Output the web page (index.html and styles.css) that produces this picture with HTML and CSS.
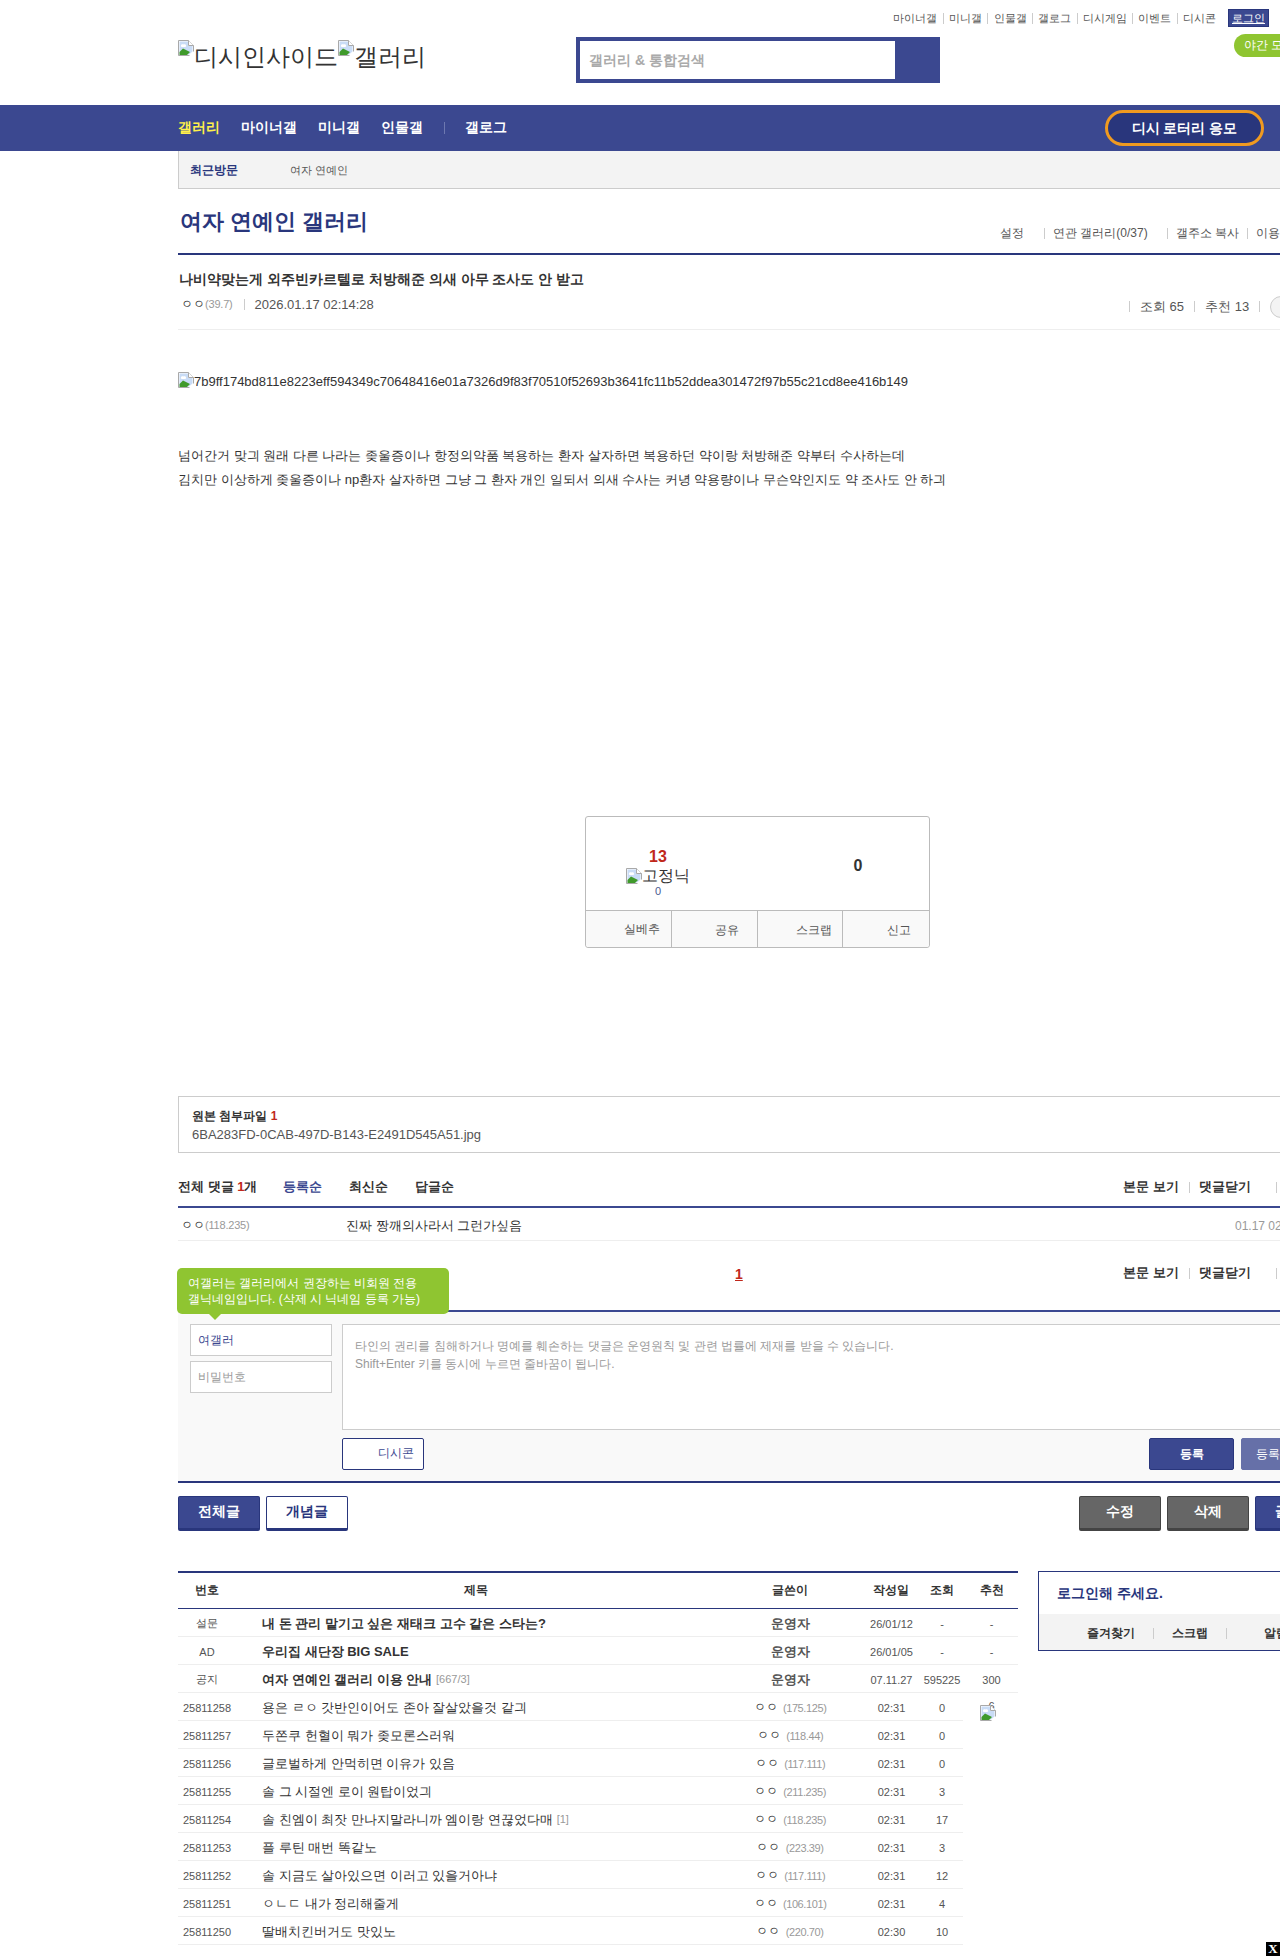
FILE: index.html
```html
<!DOCTYPE html>
<html lang="ko">
<head>
<meta charset="utf-8">
<title>여자 연예인 갤러리</title>
<link rel="stylesheet" href="styles.css">
</head>
<body>
<svg class="defs" width="0" height="0" aria-hidden="true">
  <symbol id="broken" viewBox="0 0 16 16">
    <path d="M.5.5H10.500L15.500 5.500V15.500H.5z" fill="#fff" stroke="#a9a9a9"/>
    <path d="M1.500 1.500h8.500v4.500h4.500v5.500l-3.500 3H1.500z" fill="#c9dcf6"/>
    <path d="M3 5.500c0-1 1.500-1.500 2.500-1 1-.5 2.500 0 2.500 1 .5.500 0 1.500-1 1.500H4c-1 0-1.500-1-1-1.500z" fill="#fff"/>
    <path d="M1.500 15v-3L5 8.500l4 2 3 1.500-3 3z" fill="#3f9a2b"/>
    <path d="M11 16l5-5v5z" fill="#fff"/>
    <path d="M10.500.5v5h5" fill="#fff" stroke="#a9a9a9"/>
  </symbol>
</svg>

<header class="site-head">
  <div class="wrap">
    <nav class="util">
      <a>마이너갤</a><i></i><a>미니갤</a><i></i><a>인물갤</a><i></i><a>갤로그</a><i></i><a>디시게임</a><i></i><a>이벤트</a><i></i><a>디시콘</a>
      <span class="login-btn">로그인</span>
    </nav>
    <div class="head-row">
      <div class="logo"><svg class="ico"><use href="#broken"/></svg>디시인사이드<svg class="ico"><use href="#broken"/></svg>갤러리</div>
      <div class="search"><span class="search-field">갤러리 &amp; 통합검색</span><span class="search-btn"></span></div>
      <span class="night">야간 모드</span>
    </div>
  </div>
</header>

<div class="gnb">
  <div class="wrap gnb-in">
    <a class="on">갤러리</a><a>마이너갤</a><a>미니갤</a><a>인물갤</a><i></i><a>갤로그</a>
    <span class="lotto">디시 로터리 응모</span>
  </div>
</div>

<main class="wrap">
  <div class="recent"><b>최근방문</b><span>여자 연예인</span></div>

  <div class="gall-head">
    <h1>여자 연예인 갤러리</h1>
    <div class="gall-opts"><a>설정</a><i></i><a>연관 갤러리(0/37)</a><i></i><a>갤주소 복사</a><i></i><a>이용 안내</a></div>
  </div>

  <article>
    <div class="post-head">
      <h2>나비약맞는게 외주빈카르텔로 처방해준 의새 아무 조사도 안 받고</h2>
      <div class="post-meta">
        <span class="nick">ㅇㅇ</span><span class="ip">(39.7)</span><i></i><span class="date">2026.01.17 02:14:28</span>
        <span class="post-stat"><i></i>조회 65<i></i>추천 13<i></i><span class="round"></span></span>
      </div>
    </div>
    <div class="post-body">
      <p class="alt-img"><svg class="ico"><use href="#broken"/></svg>7b9ff174bd811e8223eff594349c70648416e01a7326d9f83f70510f52693b3641fc11b52ddea301472f97b55c21cd8ee416b149</p>
      <p class="txt">넘어간거 맞긔 원래 다른 나라는 좆울증이나 항정의약품 복용하는 환자 살자하면 복용하던 약이랑 처방해준 약부터 수사하는데</p>
      <p class="txt">김치만 이상하게 좆울증이나 np환자 살자하면 그냥 그 환자 개인 일되서 의새 수사는 커녕 약용량이나 무슨약인지도 약 조사도 안 하긔</p>
    </div>
    <div class="rec-box">
      <div class="rec-top">
        <div class="rec-l">
          <b class="up">13</b>
          <span class="gonik"><svg class="ico"><use href="#broken"/></svg>고정닉</span>
          <span class="up-sub">0</span>
        </div>
        <b class="down">0</b>
      </div>
      <div class="rec-btns"><span>실베추</span><span>공유</span><span>스크랩</span><span>신고</span></div>
    </div>
  </article>

  <div class="attach"><b>원본 첨부파일 <em>1</em></b><span>6BA283FD-0CAB-497D-B143-E2491D545A51.jpg</span></div>

  <div class="cmt-head">
    <div class="cmt-sort"><b>전체 댓글 <em>1</em>개</b><a class="on">등록순</a><a>최신순</a><a>답글순</a></div>
    <div class="cmt-tools"><a>본문 보기</a><i></i><a>댓글닫기</a><i class="far"></i><a>새로고침</a></div>
  </div>
  <div class="cmt-row">
    <span class="cmt-nick"><span class="nick">ㅇㅇ</span><span class="ip">(118.235)</span></span>
    <span class="cmt-text">진짜 짱깨의사라서 그런가싶음</span>
    <span class="cmt-date">01.17 02:16:05</span>
  </div>
  <div class="cmt-page">
    <div class="tip">여갤러는 갤러리에서 권장하는 비회원 전용<br>갤닉네임입니다. (삭제 시 닉네임 등록 가능)</div>
    <a class="pg">1</a>
    <div class="cmt-tools"><a>본문 보기</a><i></i><a>댓글닫기</a><i class="far"></i><a>새로고침</a></div>
  </div>

  <div class="cmt-form">
    <div class="who">
      <div class="field name">여갤러</div>
      <div class="field pw">비밀번호</div>
    </div>
    <div class="write">
      <div class="area">타인의 권리를 침해하거나 명예를 훼손하는 댓글은 운영원칙 및 관련 법률에 제재를 받을 수 있습니다.<br>Shift+Enter 키를 동시에 누르면 줄바꿈이 됩니다.</div>
      <div class="form-btns">
        <span class="dccon">디시콘</span>
        <span class="sub-btn">등록</span><span class="sub-btn alt">등록+추천</span>
      </div>
    </div>
  </div>

  <div class="actions">
    <div class="act-l"><span class="btn navy">전체글</span><span class="btn outline">개념글</span></div>
    <div class="act-r"><span class="btn gray">수정</span><span class="btn gray">삭제</span><span class="btn navy">글쓰기</span></div>
  </div>

  <div class="bottom">
    <table class="list">
      <colgroup><col class="c-num"><col><col class="c-wr"><col class="c-dt"><col class="c-vw"><col class="c-rc"></colgroup>
      <thead><tr><th>번호</th><th class="th-t">제목</th><th>글쓴이</th><th>작성일</th><th>조회</th><th>추천</th></tr></thead>
      <tbody>
        <tr class="ntc"><td class="n">설문</td><td class="t">내 돈 관리 맡기고 싶은 재태크 고수 같은 스타는?</td><td class="w">운영자</td><td>26/01/12</td><td>-</td><td>-</td></tr>
        <tr class="ntc"><td class="n">AD</td><td class="t">우리집 새단장 BIG SALE</td><td class="w">운영자</td><td>26/01/05</td><td>-</td><td>-</td></tr>
        <tr class="ntc"><td class="n">공지</td><td class="t">여자 연예인 갤러리 이용 안내 <sup>[667/3]</sup></td><td class="w">운영자</td><td>07.11.27</td><td>595225</td><td>300</td></tr>
        <tr><td class="n">25811258</td><td class="t">용은 ㄹㅇ 갓반인이어도 존아 잘살았을것 같긔</td><td class="w"><span class="nick">ㅇㅇ</span> <span class="ip">(175.125)</span></td><td>02:31</td><td>0</td><td class="rc">6<svg class="ico over"><use href="#broken"/></svg></td></tr>
        <tr><td class="n">25811257</td><td class="t">두쫀쿠 헌혈이 뭐가 좆모론스러워</td><td class="w"><span class="nick">ㅇㅇ</span> <span class="ip">(118.44)</span></td><td>02:31</td><td>0</td><td class="rc"></td></tr>
        <tr><td class="n">25811256</td><td class="t">글로벌하게 안먹히면 이유가 있음</td><td class="w"><span class="nick">ㅇㅇ</span> <span class="ip">(117.111)</span></td><td>02:31</td><td>0</td><td class="rc"></td></tr>
        <tr><td class="n">25811255</td><td class="t">솔 그 시절엔 로이 원탑이었긔</td><td class="w"><span class="nick">ㅇㅇ</span> <span class="ip">(211.235)</span></td><td>02:31</td><td>3</td><td class="rc"></td></tr>
        <tr><td class="n">25811254</td><td class="t">솔 친엠이 최잣 만나지말라니까 엠이랑 연끊었다매 <sup>[1]</sup></td><td class="w"><span class="nick">ㅇㅇ</span> <span class="ip">(118.235)</span></td><td>02:31</td><td>17</td><td class="rc"></td></tr>
        <tr><td class="n">25811253</td><td class="t">플 루틴 매번 똑같노</td><td class="w"><span class="nick">ㅇㅇ</span> <span class="ip">(223.39)</span></td><td>02:31</td><td>3</td><td class="rc"></td></tr>
        <tr><td class="n">25811252</td><td class="t">솔 지금도 살아있으면 이러고 있을거아냐</td><td class="w"><span class="nick">ㅇㅇ</span> <span class="ip">(117.111)</span></td><td>02:31</td><td>12</td><td class="rc"></td></tr>
        <tr><td class="n">25811251</td><td class="t">ㅇㄴㄷ 내가 정리해줄게</td><td class="w"><span class="nick">ㅇㅇ</span> <span class="ip">(106.101)</span></td><td>02:31</td><td>4</td><td class="rc"></td></tr>
        <tr><td class="n">25811250</td><td class="t">딸배치킨버거도 맛있노</td><td class="w"><span class="nick">ㅇㅇ</span> <span class="ip">(220.70)</span></td><td>02:30</td><td>10</td><td class="rc"></td></tr>
      </tbody>
    </table>
    <aside class="side">
      <p class="side-msg">로그인해 주세요.</p>
      <div class="side-links"><a>즐겨찾기</a><i></i><a>스크랩</a><i></i><a class="last">알림</a></div>
    </aside>
  </div>
</main>
<span class="close-x">X</span>
</body>
</html>
```
FILE: styles.css
```css
* { box-sizing: border-box; }
html, body { margin: 0; padding: 0; }
body {
  position: relative;
  height: 1956px;
  overflow: hidden;
  font-family: "Liberation Sans", sans-serif;
  font-size: 13px;
  color: #333;
  background: #fff;
}
a { color: inherit; text-decoration: none; }
i { font-style: normal; }
em { font-style: normal; color: #c0271b; }
p, h1, h2 { margin: 0; }
.defs { position: absolute; }
.ico { display: inline-block; width: 16px; height: 16px; vertical-align: top; flex: none; }
.wrap { width: 1160px; margin-left: 178px; }

.site-head { height: 105px; }
.util { display: flex; align-items: center; justify-content: flex-end; width: 1091px; height: 27px; padding-top: 9px; font-size: 11px; color: #555; white-space: nowrap; }
.util i { width: 1px; height: 11px; background: #ccc; margin: 0 5.300px; }
.login-btn { margin-left: 12px; width: 41px; height: 18px; background: #3b4890; border: 1px solid #29367c; color: #fff; text-align: center; line-height: 17px; text-decoration: underline; }
.head-row { display: flex; padding-top: 10px; }
.logo { width: 398px; padding-top: 3px; font-size: 24px; line-height: 33px; color: #333; white-space: nowrap; }
.search { display: flex; width: 364px; height: 46px; background: #3b4890; border: 4px solid #3b4890; }
.search-field { width: 315px; background: #fff; font-size: 14px; font-weight: 700; line-height: 38px; padding-left: 9px; color: #aaa; white-space: nowrap; }
.search-btn { flex: 1; }
.night { margin-left: 294px; margin-top: -3px; width: 90px; height: 23px; border-radius: 12px; background: #8fc531; color: #fff; font-size: 12px; line-height: 23px; padding-left: 10px; white-space: nowrap; }

.gnb { height: 46px; background: #3b4890; }
.gnb-in { display: flex; align-items: center; height: 46px; font-size: 14px; font-weight: 700; color: #fff; white-space: nowrap; }
.gnb-in a { margin-right: 21px; }
.gnb-in a.on { color: #fff04a; }
.gnb-in i { width: 1px; height: 12px; background: #6d78b0; margin-right: 20px; }
.lotto { margin-left: auto; margin-right: 74px; width: 159px; height: 36px; border: 3px solid #f09a20; border-radius: 18px; background: #29367c; color: #fff; text-align: center; line-height: 30px; }

.recent { display: flex; align-items: center; height: 38px; padding: 2px 0 0 11px; background: #f3f3f3; border-left: 1px solid #ccc; border-bottom: 1px solid #ccc; font-size: 12px; }
.recent b { color: #29367c; width: 100px; }
.recent span { color: #555; font-size: 11px; }

.gall-head { display: flex; justify-content: space-between; height: 66px; border-bottom: 2px solid #29367c; padding: 17px 0 0 2px; }
.gall-head h1 { font-size: 22px; line-height: 32px; font-weight: 700; color: #29367c; }
.gall-opts { width: 338px; display: flex; align-items: center; height: 16px; margin-top: 19px; font-size: 12px; color: #555; white-space: nowrap; }
.gall-opts i { width: 1px; height: 11px; background: #ccc; margin: 0 8px; }
.gall-opts a:nth-child(1) { margin-right: 12px; }
.gall-opts a:nth-child(3) { margin-right: 11px; }

.post-head { height: 75px; border-bottom: 1px solid #eee; padding-top: 14px; }
.post-head h2 { font-size: 14px; line-height: 20px; font-weight: 700; color: #333; padding-left: 1px; }
.post-meta { display: flex; align-items: center; height: 20px; margin-top: 5px; padding-left: 3px; white-space: nowrap; }
.post-meta > i { width: 1px; height: 11px; background: #ccc; margin: 0 10px 0 11px; }
.nick { font-size: 12px; color: #333; }
.ip { font-size: 11px; color: #999; letter-spacing: -.2px; }
.date { font-size: 13px; color: #555; }
.post-stat { display: flex; align-items: center; margin-left: auto; width: 209px; margin-top: 5px; color: #555; }
.post-stat i { width: 1px; height: 11px; background: #ccc; margin: 0 10px; }
.post-stat i:first-child { margin-left: 0; }
.round { flex: none; width: 60px; height: 22px; border: 1px solid #ccc; border-radius: 11px; background: #f3f3f3; }

.post-body { height: 486px; padding-top: 42px; color: #333; }
.alt-img { font-size: 13px; line-height: 20px; height: 72px; white-space: nowrap; }
.txt { line-height: 24px; font-size: 13px; white-space: nowrap; }

.rec-box { width: 345px; height: 132px; margin-left: 407px; border: 1px solid #bbb; border-radius: 3px; }
.rec-top { display: flex; height: 94px; border-bottom: 1px solid #bbb; }
.rec-l { width: 144px; padding-top: 31px; display: flex; flex-direction: column; align-items: center; }
.up { font-size: 16px; line-height: 18px; color: #c0271b; }
.gonik { font-size: 16px; line-height: 19px; white-space: nowrap; }
.gonik .ico { margin-top: 2px; }
.up-sub { margin-top: -1px; font-size: 11px; line-height: 14px; color: #4a5a90; }
.down { margin-left: 78px; width: 100px; text-align: center; padding-top: 40px; font-size: 16px; color: #333; line-height: 18px; }
.rec-btns { display: flex; height: 36px; background: #f9f9f9; border-radius: 0 0 3px 3px; }
.rec-btns span { flex: none; width: 25%; border-right: 1px solid #bbb; text-align: right; line-height: 38px; font-size: 12px; color: #555; }
.rec-btns span:nth-child(1) { padding-right: 11px; line-height: 36px; }
.rec-btns span:nth-child(2) { padding-right: 18px; }
.rec-btns span:nth-child(3) { padding-right: 10px; }
.rec-btns span:nth-child(4) { padding-right: 18px; border-right: 0; }

.attach { margin-top: 148px; height: 57px; border: 1px solid #ccc; padding: 10px 13px; }
.attach b { display: block; font-size: 12px; line-height: 18px; color: #333; }
.attach span { display: block; font-size: 13px; line-height: 19px; color: #555; }

.cmt-head { display: flex; justify-content: space-between; align-items: center; height: 55px; border-bottom: 2px solid #3b4890; padding-top: 15px; font-size: 13px; font-weight: 700; white-space: nowrap; }
.cmt-sort { display: flex; }
.cmt-sort a { margin-left: 27px; }
.cmt-sort a.on { margin-left: 26px; color: #3b4890; }
.cmt-tools { display: flex; align-items: center; width: 215px; font-weight: 700; white-space: nowrap; font-size: 13px; }
.cmt-tools i { width: 1px; height: 11px; background: #ccc; margin: 0 10px; }
.cmt-tools i.far { margin-left: 25px; }
.cmt-row { display: flex; align-items: center; height: 33px; padding-top: 3px; border-bottom: 1px solid #eee; white-space: nowrap; }
.cmt-nick { width: 168px; padding-left: 3px; }
.cmt-text { width: 889px; font-size: 13px; }
.cmt-date { font-size: 12px; color: #999; }

.cmt-page { position: relative; display: flex; justify-content: flex-end; align-items: center; height: 71px; border-bottom: 2px solid #3b4890; padding-bottom: 5px; font-size: 13px; }
.pg { position: absolute; left: 557px; top: 25px; color: #c0271b; font-weight: 700; font-size: 14px; text-decoration: underline; }
.tip { position: absolute; left: -1px; top: 27px; width: 272px; height: 46px; background: #8fc531; border-radius: 5px; color: #fff; font-size: 12px; line-height: 16px; padding: 7px 11px; z-index: 2; white-space: nowrap; }
.tip::after { content: ""; position: absolute; left: 32px; top: 46px; border: 6px solid transparent; border-top-color: #8fc531; border-bottom: 0; }

.cmt-form { display: flex; height: 171px; background: #f9f9f9; border-bottom: 2px solid #29367c; padding: 12px 0 0 12px; }
.who { width: 152px; }
.field { width: 142px; height: 32px; background: #fff; border: 1px solid #ccc; font-size: 12px; line-height: 30px; padding-left: 7px; }
.field.name { color: #3b4890; }
.field.pw { margin-top: 5px; color: #999; }
.write { flex: 1; }
.area { height: 106px; background: #fff; border: 1px solid #ccc; padding: 12px; font-size: 12px; line-height: 18px; color: #999; }
.form-btns { display: flex; align-items: center; margin-top: 8px; white-space: nowrap; }
.dccon { width: 82px; height: 32px; background: #fff; border: 1px solid #29367c; border-radius: 2px; text-align: right; padding-right: 9px; line-height: 29px; font-size: 12px; color: #3b4890; }
.sub-btn { margin-left: 725px; width: 85px; height: 32px; background: #3b4890; border: 1px solid #29367c; border-radius: 2px; color: #fff; font-size: 12px; font-weight: 700; line-height: 30px; text-align: center; }
.sub-btn.alt { margin-left: 7px; background: #6670a8; border-color: #6670a8; font-weight: 400; }

.actions { display: flex; justify-content: space-between; margin-top: 13px; height: 35px; }
.act-l, .act-r { display: flex; gap: 6px; }
.act-r { margin-right: 1px; }
.btn { width: 82px; height: 35px; border-radius: 2px; font-size: 14px; font-weight: 700; line-height: 29px; text-align: center; border: 1px solid; border-bottom-width: 3px; }
.btn.navy { background: #3b4890; color: #fff; border-color: #29367c; }
.btn.outline { background: #fff; color: #29367c; border-color: #29367c; }
.btn.gray { background: #666; color: #fff; border-color: #444; }

.bottom { display: flex; align-items: flex-start; margin-top: 40px; gap: 20px; }
.list { width: 840px; flex: none; table-layout: fixed; border-collapse: separate; border-spacing: 0; border-top: 2px solid #29367c; font-size: 12px; }
.c-num { width: 58px; }
.c-wr { width: 142px; }
.c-dt { width: 60px; }
.c-vw { width: 42px; }
.c-rc { width: 55px; }
.list th { height: 36px; font-size: 12px; font-weight: 700; border-bottom: 1px solid #29367c; color: #333; padding: 0; }
.list th.th-t { padding-right: 4px; }
.list th:last-child { padding-left: 2px; }
.list td { height: 28px; padding: 2px 0 0; text-align: center; font-size: 11px; color: #555; border-bottom: 1px solid #eee; white-space: nowrap; }
.list td:nth-child(4) { padding-left: 1px; }
.list td:nth-child(6) { padding-left: 2px; }
.list td.rc { border-bottom: 0; position: relative; padding: 0 0 0 2px; vertical-align: top; line-height: 26px; }
.list td.t { text-align: left; padding-left: 26px; font-size: 13px; color: #333; overflow: hidden; }
.list td.w { font-size: 12px; }
.list .ip { letter-spacing: -.4px; margin-left: 2px; vertical-align: -1px; }
.ntc td.t, .ntc td.w { font-weight: 700; font-size: 13px; }
.list sup { font-size: 11px; font-weight: 400; color: #999; vertical-align: 1px; line-height: 0; }
.ico.over { position: absolute; left: 17px; top: 12px; }

.side { width: 300px; height: 80px; flex: none; border: 1px solid #29367c; }
.side-msg { height: 42px; padding: 12px 0 0 18px; font-size: 14px; font-weight: 700; line-height: 18px; color: #29367c; }
.side-links { display: flex; align-items: center; height: 36px; padding: 2px 0 0 48px; background: #f3f3f3; font-size: 12px; font-weight: 700; white-space: nowrap; }
.side-links i { width: 1px; height: 11px; background: #ccc; margin: 0 18px; }
.side-links .last { margin-left: 19px; }

.close-x { position: absolute; right: 0; bottom: 0; width: 14px; height: 14px; background: #000; color: #fff; font: 700 13px/14px "Liberation Serif", serif; text-align: center; }
```
